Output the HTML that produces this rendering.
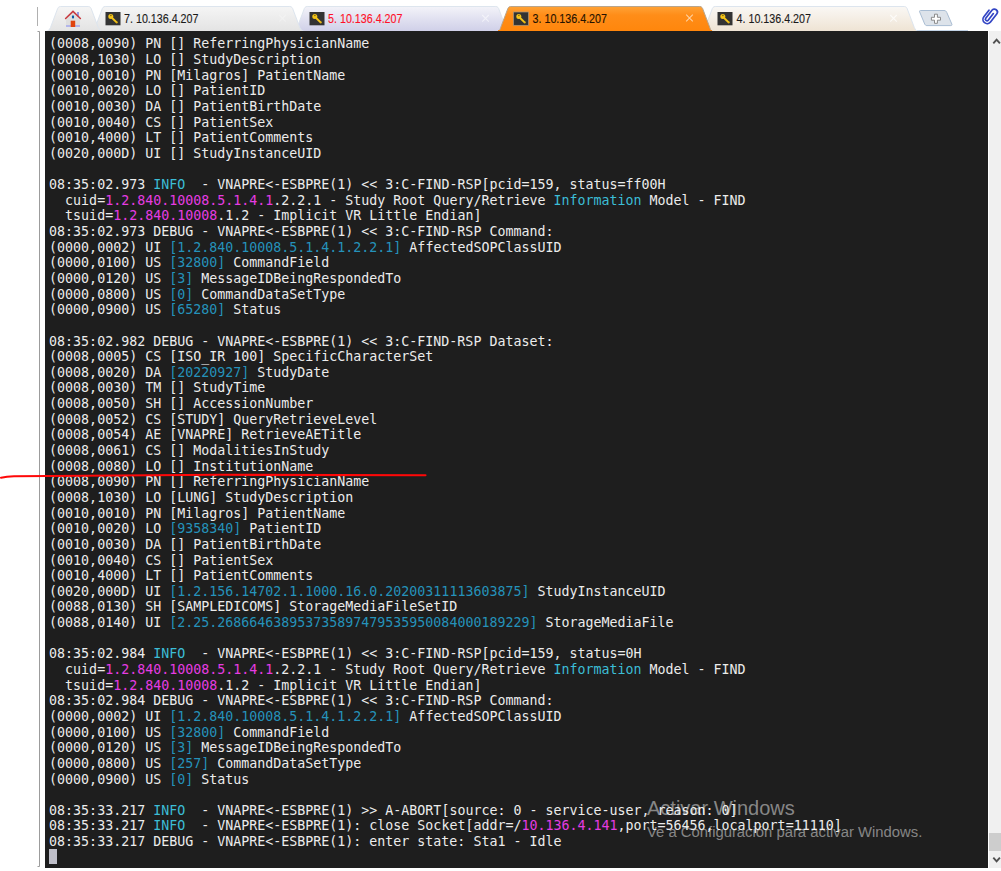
<!DOCTYPE html>
<html lang="en">
<head>
<meta charset="utf-8">
<title>MobaXterm - 3. 10.136.4.207</title>
<style>
html,body{margin:0;padding:0;background:#fff;}
body{width:1001px;height:871px;position:relative;overflow:hidden;font-family:"Liberation Sans",sans-serif;}
#tabs{position:absolute;left:0;top:0;width:1001px;height:32px;}
#tabs text{font-family:"Liberation Sans",sans-serif;font-size:12.1px;stroke-width:.12px;paint-order:stroke;}
#term{position:absolute;left:45px;top:31px;width:943px;height:837px;background:#1e1e1e;overflow:hidden;}
#txt{position:absolute;left:4.1px;top:5.4px;font-family:"DejaVu Sans Mono","Liberation Mono",monospace;font-size:13.305px;color:#ececec;}
.ln{height:15.647px;line-height:15.647px;white-space:pre;}
.c{color:#3cbdd6;}
.m{color:#e63ce2;}
.b{color:#2592ba;}
.cur{background:#bfbfc9;display:inline-block;width:8px;height:15.4px;vertical-align:top;position:relative;top:-1.1px;}
#sb{position:absolute;left:989px;top:31px;width:17px;height:837px;background:#f0f0f0;}
#thumb{position:absolute;left:0;top:802px;width:17px;height:17.5px;background:#cdcdcd;}
#ov{position:absolute;left:0;top:0;width:1001px;height:871px;pointer-events:none;}
#wm1{position:absolute;left:647px;top:796.700px;font-family:"Liberation Sans",sans-serif;font-size:20px;color:rgba(255,255,255,.47);white-space:nowrap;}
#wm2{position:absolute;left:647px;top:823.600px;font-family:"Liberation Sans",sans-serif;font-size:14.830px;color:rgba(255,255,255,.47);white-space:nowrap;}
</style>
</head>
<body>
<svg id="tabs" width="1001" height="32" viewBox="0 0 1001 32">
<defs>
<linearGradient id="gGray" x1="0" y1="0" x2="0" y2="1"><stop offset="0" stop-color="#f5f5f5"/><stop offset="1" stop-color="#e3e3e3"/></linearGradient>
<linearGradient id="gLav" x1="0" y1="0" x2="0" y2="1"><stop offset="0" stop-color="#f3f3f9"/><stop offset="1" stop-color="#cfcfe8"/></linearGradient>
<linearGradient id="gCream" x1="0" y1="0" x2="0" y2="1"><stop offset="0" stop-color="#faf8f5"/><stop offset="1" stop-color="#eee3d3"/></linearGradient>
<linearGradient id="gOr" x1="0" y1="0" x2="0" y2="1"><stop offset="0" stop-color="#ffa236"/><stop offset=".35" stop-color="#ff8d18"/><stop offset="1" stop-color="#ff860c"/></linearGradient>

</defs>
<!-- left grip lines -->
<rect x="37" y="7" width="1" height="19" fill="#b0b0b0"/>
<!-- bottom light line -->
<rect x="916" y="30" width="52" height="1" fill="#c3d3e6"/>
<!-- tab 4 -->
<path d="M700 31.5 C702.91 31.5 704.21 29.6 705.2 27.5 L711.8 10 C712.5 7.8 713.3 6.5 715.2 6.5 H904.3 C906.2 6.5 907 7.8 907.7 10 L914.3 27.5 C915.29 29.6 916.59 31.5 919.5 31.5 Z" fill="url(#gCream)" stroke="#dde5ee" stroke-width="1"/>
<!-- tab 5 -->
<path d="M292 31.5 C294.91 31.5 296.21 29.6 297.2 27.5 L303.8 10 C304.5 7.8 305.3 6.5 307.2 6.5 H495.8 C497.7 6.5 498.5 7.8 499.2 10 L505.8 27.5 C506.79 29.6 508.09 31.5 511 31.5 Z" fill="url(#gLav)" stroke="#dde5ee" stroke-width="1"/>
<!-- tab 7 -->
<path d="M90 31.5 C92.91 31.5 94.21 29.6 95.2 27.5 L101.8 10 C102.5 7.8 103.3 6.5 105.2 6.5 H289.8 C291.7 6.5 292.5 7.8 293.2 10 L299.8 27.5 C300.79 29.6 302.09 31.5 305 31.5 Z" fill="url(#gGray)" stroke="#dde5ee" stroke-width="1"/>
<!-- home tab -->
<path d="M45.3 31.5 C48.21 31.5 49.51 29.6 50.5 27.5 L57.1 10 C57.8 7.8 58.6 6.5 60.5 6.5 H88.3 C90.2 6.5 91 7.8 91.7 10 L98.3 27.5 C99.29 29.6 100.59 31.5 103.5 31.5 Z" fill="url(#gGray)" stroke="#dde5ee" stroke-width="1"/>
<!-- active tab 3 -->
<path d="M497.5 31.5 C499.29 31.5 500.09 29.6 500.7 27.5 L507.3 10 C508 7.8 508.8 6.5 510.7 6.5 H699.8 C701.7 6.5 702.5 7.8 703.2 10 L709.8 27.5 C710.41 29.6 711.21 31.5 713 31.5 Z" fill="url(#gOr)" stroke="#b9a58c" stroke-width="1"/>
<rect x="498" y="30" width="214" height="1.500" fill="#ff860c"/>
<!-- home icon -->
<g>
<path d="M66 18.500 L73 12 L80 18.500 V27 H66 Z" fill="#dedede"/>
<rect x="66" y="25" width="14" height="2" fill="#b2b5ea"/>
<rect x="77.100" y="12" width="1.800" height="4.500" fill="#8b90e0"/>
<path d="M65.600 18.500 L73 11.400 L80.400 18.500" fill="none" stroke="#c8383e" stroke-width="1.500" stroke-linecap="round" stroke-linejoin="miter"/>
<rect x="70.700" y="20.700" width="4.500" height="6.300" fill="#e0440e"/>
<ellipse cx="73" cy="16.900" rx="1.150" ry="1.600" fill="#0a5aa8"/>
</g>
<!-- keys + labels -->
<g transform="translate(105.500 12)">
<rect x="0" y="0" width="15" height="13.300" fill="#333333"/>
<circle cx="5.300" cy="4.600" r="2.500" fill="#f5c518"/>
<path d="M6.400 5.800 L11.400 10.600" stroke="#f5c518" stroke-width="2" stroke-linecap="butt" fill="none"/>
<path d="M10.300 10.800 L12 9.600 L12.300 11 L11 11.600 Z" fill="#e8b810"/>
<circle cx="5.400" cy="3.500" r=".650" fill="#5a4a10"/>
</g>
<text x="124" y="22.700" fill="#1a1a1a" stroke="#1a1a1a" textLength="74.500" lengthAdjust="spacingAndGlyphs">7. 10.136.4.207</text>
<g transform="translate(309.500 12)">
<rect x="0" y="0" width="15" height="13.300" fill="#333333"/>
<circle cx="5.300" cy="4.600" r="2.500" fill="#f5c518"/>
<path d="M6.400 5.800 L11.400 10.600" stroke="#f5c518" stroke-width="2" stroke-linecap="butt" fill="none"/>
<path d="M10.300 10.800 L12 9.600 L12.300 11 L11 11.600 Z" fill="#e8b810"/>
<circle cx="5.400" cy="3.500" r=".650" fill="#5a4a10"/>
</g>
<text x="328" y="22.700" fill="#ff1028" stroke="#ff1028" textLength="74.500" lengthAdjust="spacingAndGlyphs">5. 10.136.4.207</text>
<g transform="translate(513.500 12)">
<rect x="0" y="0" width="15" height="13.300" fill="#333333"/>
<circle cx="5.300" cy="4.600" r="2.500" fill="#f5c518"/>
<path d="M6.400 5.800 L11.400 10.600" stroke="#f5c518" stroke-width="2" stroke-linecap="butt" fill="none"/>
<path d="M10.300 10.800 L12 9.600 L12.300 11 L11 11.600 Z" fill="#e8b810"/>
<circle cx="5.400" cy="3.500" r=".650" fill="#5a4a10"/>
</g>
<rect x="513.500" y="12" width="15" height="13.300" fill="none" stroke="#a89880" stroke-width=".7"/>
<text x="532.500" y="22.700" fill="#241200" stroke="#241200" textLength="74.500" lengthAdjust="spacingAndGlyphs">3. 10.136.4.207</text>
<g transform="translate(717.500 12)">
<rect x="0" y="0" width="15" height="13.300" fill="#333333"/>
<circle cx="5.300" cy="4.600" r="2.500" fill="#f5c518"/>
<path d="M6.400 5.800 L11.400 10.600" stroke="#f5c518" stroke-width="2" stroke-linecap="butt" fill="none"/>
<path d="M10.300 10.800 L12 9.600 L12.300 11 L11 11.600 Z" fill="#e8b810"/>
<circle cx="5.400" cy="3.500" r=".650" fill="#5a4a10"/>
</g>
<text x="736.500" y="22.700" fill="#1a1a1a" stroke="#1a1a1a" textLength="74.500" lengthAdjust="spacingAndGlyphs">4. 10.136.4.207</text>
<!-- close X marks -->
<path d="M279.200 15 l6.600 6.600 m0 -6.600 l-6.600 6.600" stroke="#ffffff" stroke-width="1.100" opacity=".3" fill="none"/>
<path d="M482.200 15 l6.600 6.600 m0 -6.600 l-6.600 6.600" stroke="#ffffff" stroke-width="1.100" opacity=".55" fill="none"/>
<path d="M686.200 14.700 l6.600 6.600 m0 -6.600 l-6.600 6.600" stroke="#ffe3c4" stroke-width="1.100" opacity=".8" fill="none"/>
<path d="M890.200 15 l6.600 6.600 m0 -6.600 l-6.600 6.600" stroke="#ffffff" stroke-width="1.100" opacity=".75" fill="none"/>
<!-- new tab button -->
<path d="M920.500 10.500 H944 C945.500 10.500 946.300 11.200 946.800 12.500 L951.800 24 C952.200 25 951.800 25.600 950.800 25.600 H927 C925.800 25.600 925.200 25 924.700 24 L919.700 12 C919.300 11 919.600 10.500 920.500 10.500 Z" fill="#dde3ea" stroke="#a9bdd3" stroke-width="1"/>
<path d="M934.500 14.200 h2.900 v3.100 h3.100 v2.900 h-3.100 v3.100 h-2.900 v-3.100 h-3.100 v-2.900 h3.100 Z" fill="#ffffff" stroke="#808080" stroke-width=".9"/>
<!-- paperclip -->
<g transform="translate(989.900 15.900) rotate(38) scale(.88)" fill="none" stroke="#3345c4" stroke-width="1.950" stroke-linecap="round">
<path d="M-4.800 -4.450 V5 A4.800 4.800 0 0 0 4.800 5 V-6.450 A3.450 3.450 0 0 0 -2.100 -6.450 V5 A1.780 1.780 0 0 0 1.460 5 V-4.500"/>
</g>
</svg>
<div id="term"><div id="txt">
<div class="ln">(0008,0090) PN [] ReferringPhysicianName</div>
<div class="ln">(0008,1030) LO [] StudyDescription</div>
<div class="ln">(0010,0010) PN [Milagros] PatientName</div>
<div class="ln">(0010,0020) LO [] PatientID</div>
<div class="ln">(0010,0030) DA [] PatientBirthDate</div>
<div class="ln">(0010,0040) CS [] PatientSex</div>
<div class="ln">(0010,4000) LT [] PatientComments</div>
<div class="ln">(0020,000D) UI [] StudyInstanceUID</div>
<div class="ln">&nbsp;</div>
<div class="ln">08:35:02.973 <span class="c">INFO</span>  - VNAPRE&lt;-ESBPRE(1) &lt;&lt; 3:C-FIND-RSP[pcid=159, status=ff00H</div>
<div class="ln">  cuid=<span class="m">1.2.840.10008.5.1.4.1</span>.2.2.1 - Study Root Query/Retrieve <span class="c">Information</span> Model - FIND</div>
<div class="ln">  tsuid=<span class="m">1.2.840.10008</span>.1.2 - Implicit VR Little Endian]</div>
<div class="ln">08:35:02.973 DEBUG - VNAPRE&lt;-ESBPRE(1) &lt;&lt; 3:C-FIND-RSP Command:</div>
<div class="ln">(0000,0002) UI <span class="b">[1.2.840.10008.5.1.4.1.2.2.1]</span> AffectedSOPClassUID</div>
<div class="ln">(0000,0100) US <span class="b">[32800]</span> CommandField</div>
<div class="ln">(0000,0120) US <span class="b">[3]</span> MessageIDBeingRespondedTo</div>
<div class="ln">(0000,0800) US <span class="b">[0]</span> CommandDataSetType</div>
<div class="ln">(0000,0900) US <span class="b">[65280]</span> Status</div>
<div class="ln">&nbsp;</div>
<div class="ln">08:35:02.982 DEBUG - VNAPRE&lt;-ESBPRE(1) &lt;&lt; 3:C-FIND-RSP Dataset:</div>
<div class="ln">(0008,0005) CS [ISO_IR 100] SpecificCharacterSet</div>
<div class="ln">(0008,0020) DA <span class="b">[20220927]</span> StudyDate</div>
<div class="ln">(0008,0030) TM [] StudyTime</div>
<div class="ln">(0008,0050) SH [] AccessionNumber</div>
<div class="ln">(0008,0052) CS [STUDY] QueryRetrieveLevel</div>
<div class="ln">(0008,0054) AE [VNAPRE] RetrieveAETitle</div>
<div class="ln">(0008,0061) CS [] ModalitiesInStudy</div>
<div class="ln">(0008,0080) LO [] InstitutionName</div>
<div class="ln">(0008,0090) PN [] ReferringPhysicianName</div>
<div class="ln">(0008,1030) LO [LUNG] StudyDescription</div>
<div class="ln">(0010,0010) PN [Milagros] PatientName</div>
<div class="ln">(0010,0020) LO <span class="b">[9358340]</span> PatientID</div>
<div class="ln">(0010,0030) DA [] PatientBirthDate</div>
<div class="ln">(0010,0040) CS [] PatientSex</div>
<div class="ln">(0010,4000) LT [] PatientComments</div>
<div class="ln">(0020,000D) UI <span class="b">[1.2.156.14702.1.1000.16.0.20200311113603875]</span> StudyInstanceUID</div>
<div class="ln">(0088,0130) SH [SAMPLEDICOMS] StorageMediaFileSetID</div>
<div class="ln">(0088,0140) UI <span class="b">[2.25.268664638953735897479535950084000189229]</span> StorageMediaFile</div>
<div class="ln">&nbsp;</div>
<div class="ln">08:35:02.984 <span class="c">INFO</span>  - VNAPRE&lt;-ESBPRE(1) &lt;&lt; 3:C-FIND-RSP[pcid=159, status=0H</div>
<div class="ln">  cuid=<span class="m">1.2.840.10008.5.1.4.1</span>.2.2.1 - Study Root Query/Retrieve <span class="c">Information</span> Model - FIND</div>
<div class="ln">  tsuid=<span class="m">1.2.840.10008</span>.1.2 - Implicit VR Little Endian]</div>
<div class="ln">08:35:02.984 DEBUG - VNAPRE&lt;-ESBPRE(1) &lt;&lt; 3:C-FIND-RSP Command:</div>
<div class="ln">(0000,0002) UI <span class="b">[1.2.840.10008.5.1.4.1.2.2.1]</span> AffectedSOPClassUID</div>
<div class="ln">(0000,0100) US <span class="b">[32800]</span> CommandField</div>
<div class="ln">(0000,0120) US <span class="b">[3]</span> MessageIDBeingRespondedTo</div>
<div class="ln">(0000,0800) US <span class="b">[257]</span> CommandDataSetType</div>
<div class="ln">(0000,0900) US <span class="b">[0]</span> Status</div>
<div class="ln">&nbsp;</div>
<div class="ln">08:35:33.217 <span class="c">INFO</span>  - VNAPRE&lt;-ESBPRE(1) &gt;&gt; A-ABORT[source: 0 - service-user, reason: 0]</div>
<div class="ln">08:35:33.217 <span class="c">INFO</span>  - VNAPRE&lt;-ESBPRE(1): close Socket[addr=/<span class="m">10.136.4.141</span>,port=56456,localport=11110]</div>
<div class="ln">08:35:33.217 DEBUG - VNAPRE&lt;-ESBPRE(1): enter state: Sta1 - Idle</div>
<div class="ln"><span class="cur">&nbsp;</span></div>
</div></div>
<div id="sb"><div id="thumb"></div>
<svg width="17" height="837" style="position:absolute;left:0;top:0">
<path d="M4.300 12.300 L7.600 8.700 L10.900 12.300" fill="none" stroke="#505050" stroke-width="1.900"/>
<path d="M4.300 826.700 L7.600 830.300 L10.900 826.700" fill="none" stroke="#505050" stroke-width="1.900"/>
</svg>
</div>
<svg id="ov" width="1001" height="871" viewBox="0 0 1001 871">
<!-- left bracket line -->
<path d="M37.500 31.500 H39.500 V866.500 H37.500" fill="none" stroke="#9c9c9c" stroke-width="1"/>
<!-- red annotation -->
<path d="M1 477.700 C5 476.900 9 476.500 14 476.300 C60 475.500 140 475 220 474.800 C300 474.900 370 475.600 425.500 475.300" fill="none" stroke="#ff0808" stroke-width="2.1" stroke-linecap="round"/>
</svg>
<div id="wm1">Activar Windows</div>
<div id="wm2">Ve a Configuración para activar Windows.</div>
</body>
</html>
